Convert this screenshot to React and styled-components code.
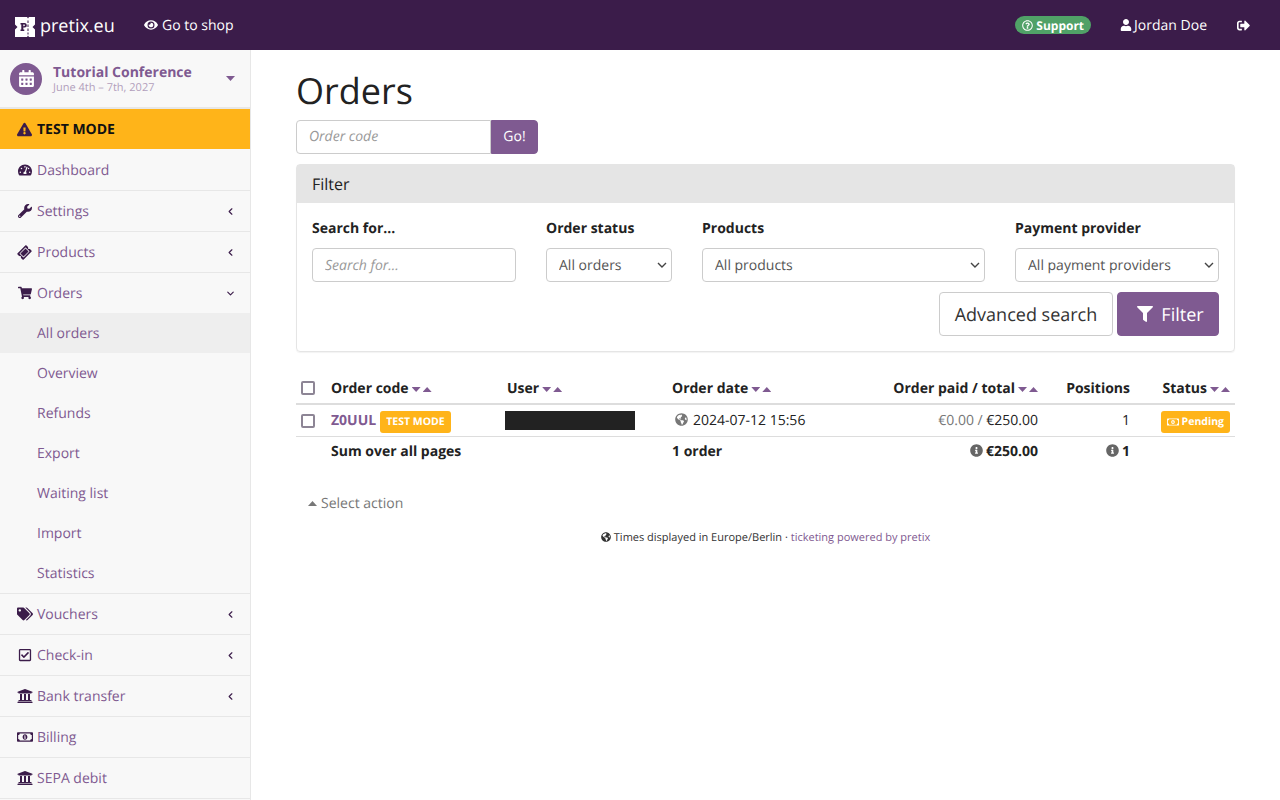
import React from 'react';
import styled, { createGlobalStyle } from 'styled-components';
import { ChevronLeft, ChevronDown } from 'lucide-react';
import {
  FaEye, FaUser, FaSignOutAlt, FaCalendarAlt, FaExclamationTriangle, FaTachometerAlt, FaWrench,
  FaTicketAlt, FaShoppingCart, FaTags, FaRegCheckSquare, FaUniversity, FaRegMoneyBillAlt, FaFilter,
  FaGlobeAmericas, FaInfoCircle, FaRegQuestionCircle,
} from 'react-icons/fa';

const purple = '#7f5a91';
const dark = '#3b1c4a';

const chevron = "url(\"data:image/svg+xml,%3Csvg xmlns='http://www.w3.org/2000/svg' width='10' height='6'%3E%3Cpath d='M1 1l4 4 4-4' fill='none' stroke='%23444' stroke-width='1.4'/%3E%3C/svg%3E\")";

const Global = createGlobalStyle`
  html, body { margin: 0; padding: 0; background: #fff; overflow: hidden; }
  body {
    font-family: "Open Sans", "Liberation Sans", sans-serif;
    font-size: 14px;
    color: #222;
    text-rendering: geometricPrecision;
  }
  input, select, button { text-rendering: inherit; }
  * { box-sizing: border-box; }
`;

const Page = styled.div`
  width: 1280px;
  height: 800px;
  display: flex;
  flex-direction: column;
`;

const TopBar = styled.header`
  height: 50px;
  flex: none;
  background: ${dark};
  color: #fff;
  display: flex;
  align-items: center;
  padding: 0 30px 0 15px;
`;

const Brand = styled.div`
  display: flex;
  align-items: center;
  gap: 5px;
  padding-top: 2px;
  font-size: 18px;
  width: 129px;
  svg { flex: none; margin-top: 2px; }
`;

const TopLink = styled.span`
  display: inline-flex;
  align-items: center;
  gap: ${(p) => p.$gap ?? 4}px;
  font-size: 14px;
  margin-left: ${(p) => p.$ml || 0}px;
  svg { font-size: ${(p) => p.$icon || 14}px; }
`;

const Spacer = styled.div`
  flex: 1;
`;

const SupportPill = styled.span`
  display: inline-flex;
  align-items: center;
  gap: 3px;
  height: 18px;
  padding: 0 7px;
  border-radius: 9px;
  background: #50a167;
  color: #fff;
  font-size: 12px;
  font-weight: 700;
  svg { font-size: 11px; }
`;

const Body = styled.div`
  flex: 1;
  display: flex;
  min-height: 0;
`;

const Sidebar = styled.aside`
  width: 251px;
  flex: none;
  background: #f8f8f8;
  border-right: 1px solid #e7e7e7;
  display: flex;
  flex-direction: column;
`;

const EventBox = styled.div`
  height: 59px;
  flex: none;
  display: flex;
  align-items: center;
  padding: 0 15px 0 10px;
  border-bottom: 2px solid #e7e7e7;
`;

const EventIcon = styled.div`
  width: 32px;
  height: 32px;
  border-radius: 50%;
  background: ${purple};
  color: #fff;
  display: flex;
  align-items: center;
  justify-content: center;
  font-size: 17px;
  flex: none;
`;

const EventText = styled.div`
  flex: 1;
  margin-left: 11px;
  padding-top: 3px;
  color: ${purple};
`;

const EventName = styled.div`
  font-size: 14px;
  font-weight: 700;
  line-height: 15px;
`;

const EventDate = styled.div`
  font-size: 11px;
  line-height: 14px;
  margin-top: 1px;
  color: #b29fbc;
`;

const TestBar = styled.div`
  height: 41px;
  flex: none;
  display: flex;
  align-items: center;
  gap: 5px;
  padding-left: 17px;
  background: #ffb419;
  color: #111;
  font-weight: 700;
  font-size: 14px;
  border-bottom: 1px solid #f8f8f8;
  svg { color: ${dark}; font-size: 15px; flex: none; }
`;

const NavItem = styled.div`
  height: ${(p) => (p.$open ? 40 : 41)}px;
  flex: none;
  display: flex;
  align-items: center;
  padding: 0 14px 0 17px;
  border-bottom: ${(p) => (p.$open ? 'none' : '1px solid #e7e7e7')};
  color: ${purple};
  font-size: 14px;
`;

const NavIcon = styled.span`
  width: 15px;
  margin-right: 5px;
  display: flex;
  justify-content: center;
  color: ${dark};
  font-size: ${(p) => p.$size || 14}px;
  svg { flex: none; }
`;

const TicketIcon = styled(FaTicketAlt)`
  transform: rotate(-45deg);
`;

const NavLabel = styled.span`
  flex: 1;
`;

const NavArrow = styled.span`
  display: flex;
  color: ${dark};
`;

const SubItem = styled.div`
  height: 40px;
  flex: none;
  display: flex;
  align-items: center;
  padding-left: 37px;
  color: ${purple};
  font-size: 14px;
  background: ${(p) => (p.$active ? '#eeeeee' : 'transparent')};
`;

const SubGroup = styled.div`
  border-bottom: 1px solid #e7e7e7;
`;

const Main = styled.main`
  flex: 1;
  min-width: 0;
  padding: 0 45px;
`;

const Title = styled.h1`
  margin: 16px 0 0;
  font-size: 36px;
  font-weight: 400;
  line-height: 50px;
  color: #222;
`;

const SearchRow = styled.form`
  display: flex;
  margin: 4px 0 10px;
`;

const TextInput = styled.input`
  height: 34px;
  width: ${(p) => p.$w || 204}px;
  border: 1px solid #ccc;
  border-radius: ${(p) => p.$radius || '4px'};
  padding: 0 12px ${(p) => p.$pb || 0}px;
  font: 14px "Open Sans", sans-serif;
  color: #555;
  background: #fff;
  &::placeholder { color: #999; font-style: italic; opacity: 1; }
`;

const GoButton = styled.button`
  height: 34px;
  width: 47px;
  border: 1px solid ${purple};
  border-radius: 0 4px 4px 0;
  background: ${purple};
  color: #fff;
  font: 14px "Open Sans", sans-serif;
  padding: 0 0 2px;
`;

const Panel = styled.section`
  border: 1px solid #e5e5e5;
  border-radius: 4px;
  box-shadow: 0 1px 1px rgba(0, 0, 0, 0.05);
  height: 188px;
`;

const PanelHead = styled.div`
  height: 38px;
  background: #e5e5e5;
  padding: 0 15px;
  display: flex;
  align-items: center;
  font-size: 16px;
  color: #222;
`;

const PanelBody = styled.div`
  padding: 15px 15px 0;
`;

const FieldRow = styled.div`
  display: flex;
  gap: 30px;
`;

const Field = styled.label`
  display: flex;
  flex-direction: column;
  width: ${(p) => p.$w}px;
  flex: none;
`;

const FieldName = styled.span`
  font-weight: 700;
  font-size: 14px;
  line-height: 20px;
  padding-top: 1px;
  margin-bottom: 9px;
`;

const Select = styled.select`
  appearance: none;
  height: 34px;
  width: 100%;
  border: 1px solid #ccc;
  border-radius: 4px;
  padding: 0 20px 0 12px;
  background: #fff ${chevron} no-repeat right 4px center;
  color: #555;
  font: 14px "Open Sans", sans-serif;
`;

const ButtonRow = styled.div`
  display: flex;
  justify-content: flex-end;
  gap: 4px;
  margin-top: 10px;
`;

const BigButton = styled.button`
  height: 44px;
  width: ${(p) => p.$w}px;
  border-radius: 4px;
  border: 1px solid ${(p) => (p.$primary ? purple : '#ccc')};
  background: ${(p) => (p.$primary ? purple : '#fff')};
  color: ${(p) => (p.$primary ? '#fff' : '#333')};
  font: 18px "Open Sans", sans-serif;
  display: inline-flex;
  align-items: center;
  justify-content: center;
  gap: 8px;
  padding: 2px 0 0 ${(p) => (p.$primary ? 5 : 0)}px;
  svg { font-size: 16px; margin-top: -2px; }
`;

const Table = styled.table`
  width: 939px;
  margin-top: 20px;
  border-collapse: collapse;
  table-layout: fixed;
  font-size: 14px;
`;

const Th = styled.th`
  height: 32px;
  padding: 6px 5px 4px;
  border-bottom: 2px solid #ddd;
  font-weight: 700;
  color: #222;
  text-align: ${(p) => p.$align || 'left'};
`;

const Td = styled.td`
  height: ${(p) => (p.$foot ? 30 : 32)}px;
  padding: ${(p) => (p.$foot ? 0 : p.$nudge ? 2 : 1)}px 5px 0;
  border-bottom: ${(p) => (p.$foot ? 'none' : '1px solid #ddd')};
  font-weight: ${(p) => (p.$foot ? 700 : 400)};
  text-align: ${(p) => p.$align || 'left'};
  white-space: nowrap;
`;

const Check = styled.input`
  appearance: none;
  display: block;
  width: 14px;
  height: 14px;
  margin: 0 0 ${(p) => (p.$lift ? 2 : 0)}px;
  background: #fff;
  border: 2px solid #8d8595;
  border-radius: 2px;
`;

const Sort = styled.span`
  display: inline-flex;
  align-items: center;
  gap: 2px;
  margin-left: 3px;
  vertical-align: 1px;
`;

const Caret = styled.span`
  display: inline-block;
  flex: none;
  width: 9px;
  height: 5px;
  background: ${(p) => p.$color || purple};
  clip-path: ${(p) => (p.$up ? 'polygon(50% 0, 100% 100%, 0 100%)' : 'polygon(0 0, 100% 0, 50% 100%)')};
`;

const CodeLink = styled.a`
  color: ${purple};
  font-weight: 700;
`;

const Badge = styled.span`
  display: inline-flex;
  align-items: center;
  gap: 3px;
  height: 22px;
  padding: 0 6px;
  margin-left: 4px;
  border-radius: 3px;
  background: #ffb419;
  color: #fff;
  font-size: 10.5px;
  font-weight: 700;
  vertical-align: middle;
  position: relative;
  top: 1px;
  svg { font-size: 12px; }
`;

const Redacted = styled.div`
  width: 130px;
  height: 19px;
  background: #222;
  margin: 0 0 2px -2px;
`;

const Muted = styled.span`
  color: #777;
`;

const GrayIcon = styled.span`
  color: ${(p) => p.$color || '#666'};
  display: inline-flex;
  font-size: 13px;
  margin-left: ${(p) => p.$before || 0}px;
  margin-right: ${(p) => p.$gap || 3}px;
  vertical-align: -1px;
`;

const ActionLine = styled.div`
  margin: 28px 0 0 12px;
  color: #777;
  font-size: 14px;
  display: flex;
  align-items: center;
  gap: 4px;
`;

const Footer = styled.footer`
  margin-top: 17px;
  text-align: center;
  font-size: 11px;
  color: #333;
  a { color: ${purple}; }
  svg { font-size: 10px; vertical-align: -1px; margin-right: 3px; }
`;

const Logo = () => (
  <svg width="20" height="20" viewBox="0 0 20 20">
    <path fill="#fff" d="M0 0h12l1 1.5L14 0h6v7.5L17.5 10 20 12.500V20h-6l-1-1.500L12 20H0v-7.500L2.500 10 0 7.500z" />
    <path fill={dark} d="M12.500 3.500h1v2.500h-1zM12.500 7.500h1v2.500h-1zM12.500 11.500h1v2.500h-1zM12.500 15.500h1v2h-1z" />
    <path fill={dark} d="M5.500 6H9.500c1.600 0 2.300 1 2.300 2.300s-.7 2.300-2.300 2.300H8.300v2h1V14H5.500v-1.400h.8V7.400h-.8zM8.300 7.400v1.800h.8c.6 0 .8-.4.8-.9s-.2-.9-.8-.9z" />
  </svg>
);

const Nav = ({ icon, size, label, arrow }) => (
  <NavItem $open={arrow === 'down'}>
    <NavIcon $size={size}>{icon}</NavIcon>
    <NavLabel>{label}</NavLabel>
    {arrow && (
      <NavArrow>
        {arrow === 'down' ? <ChevronDown size={11} strokeWidth={2.5} /> : <ChevronLeft size={11} strokeWidth={2.5} />}
      </NavArrow>
    )}
  </NavItem>
);

const SortArrows = () => (
  <Sort><Caret /><Caret $up /></Sort>
);

const subItems = ['All orders', 'Overview', 'Refunds', 'Export', 'Waiting list', 'Import', 'Statistics'];

const App = () => (
  <Page>
    <Global />
    <TopBar>
      <Brand><Logo /> pretix.eu</Brand>
      <TopLink><FaEye /> Go to shop</TopLink>
      <Spacer />
      <SupportPill><FaRegQuestionCircle /> Support</SupportPill>
      <TopLink $ml={29} $gap={2} $icon={12}><FaUser /> Jordan Doe</TopLink>
      <TopLink $ml={30} $icon={13}><FaSignOutAlt /></TopLink>
    </TopBar>
    <Body>
      <Sidebar>
        <EventBox>
          <EventIcon><FaCalendarAlt /></EventIcon>
          <EventText>
            <EventName>Tutorial Conference</EventName>
            <EventDate>June 4th – 7th, 2027</EventDate>
          </EventText>
          <Caret />
        </EventBox>
        <TestBar><FaExclamationTriangle /> TEST MODE</TestBar>
        <Nav icon={<FaTachometerAlt />} label="Dashboard" />
        <Nav icon={<FaWrench />} label="Settings" arrow="left" />
        <Nav icon={<TicketIcon />} size={13} label="Products" arrow="left" />
        <Nav icon={<FaShoppingCart />} label="Orders" arrow="down" />
        <SubGroup>
          {subItems.map((s, i) => (
            <SubItem key={s} $active={i === 0}>{s}</SubItem>
          ))}
        </SubGroup>
        <Nav icon={<FaTags />} size={16} label="Vouchers" arrow="left" />
        <Nav icon={<FaRegCheckSquare />} label="Check-in" arrow="left" />
        <Nav icon={<FaUniversity />} size={16} label="Bank transfer" arrow="left" />
        <Nav icon={<FaRegMoneyBillAlt />} size={16} label="Billing" />
        <Nav icon={<FaUniversity />} size={16} label="SEPA debit" />
      </Sidebar>
      <Main>
        <Title>Orders</Title>
        <SearchRow>
          <TextInput $w={195} $pb={2} $radius="4px 0 0 4px" placeholder="Order code" />
          <GoButton type="button">Go!</GoButton>
        </SearchRow>
        <Panel>
          <PanelHead>Filter</PanelHead>
          <PanelBody>
            <FieldRow>
              <Field $w={204}>
                <FieldName>Search for...</FieldName>
                <TextInput placeholder="Search for..." />
              </Field>
              <Field $w={126}>
                <FieldName>Order status</FieldName>
                <Select><option>All orders</option></Select>
              </Field>
              <Field $w={283}>
                <FieldName>Products</FieldName>
                <Select><option>All products</option></Select>
              </Field>
              <Field $w={204}>
                <FieldName>Payment provider</FieldName>
                <Select><option>All payment providers</option></Select>
              </Field>
            </FieldRow>
            <ButtonRow>
              <BigButton type="button" $w={174}>Advanced search</BigButton>
              <BigButton type="button" $w={102} $primary><FaFilter /> Filter</BigButton>
            </ButtonRow>
          </PanelBody>
        </Panel>
        <Table>
          <colgroup>
            <col width="30" />
            <col width="176" />
            <col width="165" />
            <col width="203" />
            <col width="173" />
            <col width="92" />
            <col width="100" />
          </colgroup>
          <thead>
            <tr>
              <Th><Check type="checkbox" $lift /></Th>
              <Th>Order code<SortArrows /></Th>
              <Th>User<SortArrows /></Th>
              <Th>Order date<SortArrows /></Th>
              <Th $align="right">Order paid / total<SortArrows /></Th>
              <Th $align="right">Positions</Th>
              <Th $align="right">Status<SortArrows /></Th>
            </tr>
          </thead>
          <tbody>
            <tr>
              <Td $nudge><Check type="checkbox" /></Td>
              <Td $nudge><CodeLink>Z0UUL</CodeLink><Badge>TEST MODE</Badge></Td>
              <Td $nudge><Redacted /></Td>
              <Td><GrayIcon $before={3} $gap={5} $color="#777"><FaGlobeAmericas /></GrayIcon>2024-07-12 15:56</Td>
              <Td $align="right"><Muted>€0.00 /</Muted> €250.00</Td>
              <Td $align="right">1</Td>
              <Td $nudge $align="right"><Badge><FaRegMoneyBillAlt /> Pending</Badge></Td>
            </tr>
            <tr>
              <Td $foot />
              <Td $foot>Sum over all pages</Td>
              <Td $foot />
              <Td $foot>1 order</Td>
              <Td $foot $align="right"><GrayIcon><FaInfoCircle /></GrayIcon>€250.00</Td>
              <Td $foot $align="right"><GrayIcon><FaInfoCircle /></GrayIcon>1</Td>
              <Td $foot />
            </tr>
          </tbody>
        </Table>
        <ActionLine><Caret $up $color="#777" /> Select action</ActionLine>
        <Footer>
          <FaGlobeAmericas />Times displayed in Europe/Berlin · <a>ticketing powered by pretix</a>
        </Footer>
      </Main>
    </Body>
  </Page>
);

export default App;
